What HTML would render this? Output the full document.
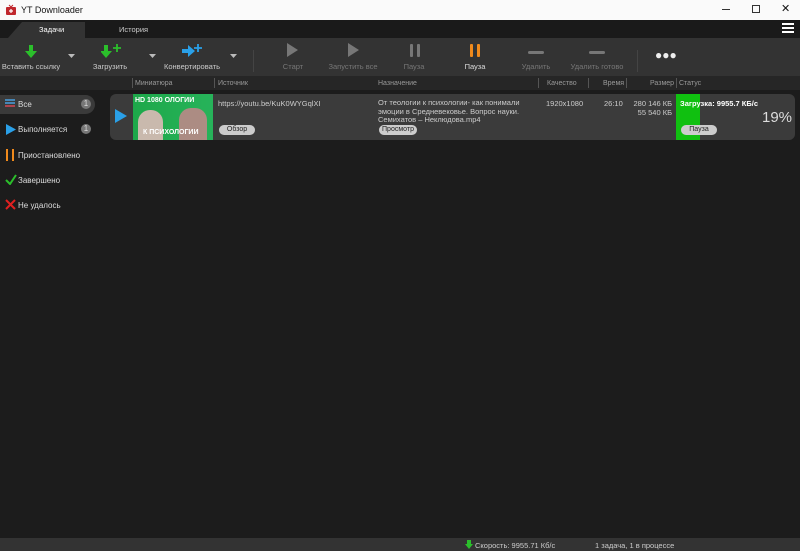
<!DOCTYPE html>
<html><head><meta charset="utf-8"><style>
*{margin:0;padding:0;box-sizing:border-box}
body{width:800px;height:551px;background:#1c1c1c;font-family:"Liberation Sans",sans-serif;font-size:8px;color:#ddd;position:relative;overflow:hidden}
.abs{position:absolute}
.title{left:0;top:0;width:800px;height:20px;background:#fafafa;color:#111;font-size:9px}
.tabs{left:0;top:20px;width:800px;height:18px;background:#1a1a1a}
.tb{left:0;top:38px;width:800px;height:38px;background:#333}
.lbl{font-size:7.5px;color:#777;text-align:center;width:80px}
.hdr{left:0;top:76px;width:800px;height:14px;background:#262626;color:#999;font-size:7px}
.hdr span{position:absolute;top:4px}
.sep{position:absolute;top:2px;width:1px;height:10px;background:#555}
.side div{position:absolute;left:18px;font-size:8px;color:#ddd}
.badge{position:absolute;width:10px;height:10px;border-radius:5px;background:#777;color:#eee;font-size:6px;text-align:center;line-height:10px}
</style></head><body>
<div class="abs title">
 <svg class="abs" style="left:5px;top:4px" width="12" height="12"><rect x="1" y="3" width="10" height="8" rx="1" fill="#c0272d"/><path d="M4 1l2 2 2-2" stroke="#c0272d" fill="none"/><path d="M6 5v4M4 7h4" stroke="#fff" stroke-width="1.2"/></svg>
 <span class="abs" style="left:21px;top:5px">YT Downloader</span>
 <span class="abs" style="left:722px;top:9px;width:8px;height:1px;background:#333"></span>
 <span class="abs" style="left:752px;top:5px;width:8px;height:8px;border:1px solid #333"></span>
 <span class="abs" style="left:781px;top:2px;font-size:11px">✕</span>
</div>
<div class="abs tabs">
 <svg class="abs" style="left:0;top:0" width="90" height="18"><path d="M8 18L22 2H85V18Z" fill="#333"/></svg>
 <span class="abs" style="left:39px;top:5px;color:#fff;font-size:7.5px">Задачи</span>
 <span class="abs" style="left:119px;top:5px;color:#ccc;font-size:7.5px">История</span>
 <div class="abs" style="left:782px;top:3px;width:12px;height:2px;background:#fff;box-shadow:0 4px #fff,0 8px #fff"></div>
</div>
<div class="abs tb">
 <svg class="abs" style="left:24px;top:7px" width="14" height="14"><path d="M5 0h4v6h4L7 13 1 6h4z" fill="#2bbf2b"/></svg>
 <div class="abs lbl" style="left:-9px;top:24px;color:#ccc">Вставить ссылку</div>
 <svg class="abs" style="left:68px;top:16px" width="8" height="5"><path d="M0 0h7L3.5 4z" fill="#bbb"/></svg>
 <svg class="abs" style="left:101px;top:5px" width="22" height="16"><path d="M3 2h4v6h4L5 15-1 8h4z" fill="#2bbf2b"/><path d="M16 1v8M12 5h8" stroke="#2bbf2b" stroke-width="1.8"/></svg>
 <div class="abs lbl" style="left:70px;top:24px;color:#ccc">Загрузить</div>
 <svg class="abs" style="left:149px;top:16px" width="8" height="5"><path d="M0 0h7L3.5 4z" fill="#bbb"/></svg>
 <svg class="abs" style="left:182px;top:5px" width="22" height="16"><path d="M0 6h6V2l7 6-7 6v-4H0z" fill="#2aa0e8"/><path d="M16 1v8M12 5h8" stroke="#2aa0e8" stroke-width="1.8"/></svg>
 <div class="abs lbl" style="left:152px;top:24px;color:#ccc">Конвертировать</div>
 <svg class="abs" style="left:230px;top:16px" width="8" height="5"><path d="M0 0h7L3.5 4z" fill="#bbb"/></svg>
 <div class="abs" style="left:253px;top:12px;width:1px;height:22px;background:#444"></div>
 <svg class="abs" style="left:287px;top:5px" width="12" height="14"><path d="M0 0L11 7 0 14z" fill="#777"/></svg>
 <div class="abs lbl" style="left:253px;top:24px">Старт</div>
 <svg class="abs" style="left:348px;top:5px" width="12" height="14"><path d="M0 0L11 7 0 14z" fill="#777"/></svg>
 <div class="abs lbl" style="left:313px;top:24px">Запустить все</div>
 <svg class="abs" style="left:409px;top:6px" width="12" height="13"><rect x="1" width="3" height="13" rx="1" fill="#777"/><rect x="8" width="3" height="13" rx="1" fill="#777"/></svg>
 <div class="abs lbl" style="left:374px;top:24px">Пауза</div>
 <svg class="abs" style="left:469px;top:6px" width="12" height="13"><rect x="1" width="3" height="13" rx="1" fill="#f08a1c"/><rect x="8" width="3" height="13" rx="1" fill="#f08a1c"/></svg>
 <div class="abs lbl" style="left:435px;top:24px;color:#ddd">Пауза</div>
 <div class="abs" style="left:528px;top:13px;width:16px;height:3px;border-radius:2px;background:#777"></div>
 <div class="abs lbl" style="left:496px;top:24px">Удалить</div>
 <div class="abs" style="left:589px;top:13px;width:16px;height:3px;border-radius:2px;background:#777"></div>
 <div class="abs lbl" style="left:557px;top:24px;width:80px">Удалить готово</div>
 <div class="abs" style="left:637px;top:12px;width:1px;height:22px;background:#444"></div>
 <div class="abs" style="left:655px;top:15px;color:#eee;font-size:12px;letter-spacing:0;line-height:4px">●●●</div>
</div>
<div class="abs hdr">
 <div class="sep" style="left:132px"></div><span style="left:135px">Миниатюра</span>
 <div class="sep" style="left:214px"></div><span style="left:218px">Источник</span>
 <span style="left:378px">Назначение</span>
 <div class="sep" style="left:538px"></div><span style="left:547px">Качество</span>
 <div class="sep" style="left:588px"></div><span style="left:603px">Время</span>
 <div class="sep" style="left:626px"></div><span style="left:650px">Размер</span>
 <div class="sep" style="left:676px"></div><span style="left:679px">Статус</span>
</div>
<div class="side">
 <div class="abs" style="left:0;top:95px;width:95px;height:19px;background:#3a3a3a;border-radius:0 10px 10px 0"></div>
 <svg class="abs" style="left:5px;top:99px" width="10" height="9"><path d="M0 1h10M0 4h10M0 7h10" stroke="#4aa0e0" stroke-width="1.4"/><path d="M0 7h10" stroke="#d33" stroke-width="1.4"/></svg>
 <div style="top:100px">Все</div><div class="badge" style="left:81px;top:99px">1</div>
 <svg class="abs" style="left:6px;top:124px" width="10" height="11"><path d="M0 0L10 5.5 0 11z" fill="#2aa0e8"/></svg>
 <div style="top:125px">Выполняется</div><div class="badge" style="left:81px;top:124px">1</div>
 <svg class="abs" style="left:6px;top:149px" width="9" height="12"><rect width="2" height="12" fill="#f08a1c"/><rect x="6" width="2" height="12" fill="#f08a1c"/></svg>
 <div style="top:151px">Приостановлено</div>
 <svg class="abs" style="left:5px;top:174px" width="12" height="11"><path d="M1 6l4 4 6-9" stroke="#2bbf2b" stroke-width="2" fill="none"/></svg>
 <div style="top:176px">Завершено</div>
 <svg class="abs" style="left:5px;top:199px" width="11" height="11"><path d="M1 1l9 9M10 1l-9 9" stroke="#e02020" stroke-width="2"/></svg>
 <div style="top:201px">Не удалось</div>
</div>
<div class="abs" style="left:110px;top:94px;width:685px;height:46px;background:#3b3b3b;border-radius:6px"></div>
<svg class="abs" style="left:115px;top:109px" width="12" height="14"><path d="M0 0L12 7 0 14z" fill="#2aa0e8"/></svg>
<div class="abs" style="left:133px;top:94px;width:80px;height:46px;background:linear-gradient(90deg,#1da84a,#27b35a);overflow:hidden">
 <div class="abs" style="left:2px;top:3px;font-size:7px;color:#fff;font-weight:bold">HD 1080 ОЛОГИИ</div>
 <div class="abs" style="left:5px;top:16px;width:25px;height:30px;border-radius:12px 12px 0 0;background:#c9b9ad"></div>
 <div class="abs" style="left:46px;top:14px;width:28px;height:32px;border-radius:12px 12px 0 0;background:#b88;opacity:.9"></div>
 <div class="abs" style="left:10px;top:35px;font-size:7px;color:#fff;font-weight:bold">К ПСИХОЛОГИИ</div>
</div>
<div class="abs" style="left:218px;top:99px;font-size:7.5px;color:#ccc">https://youtu.be/KuK0WYGqlXI</div>
<div class="abs" style="left:219px;top:125px;width:36px;height:10px;border-radius:5px;background:#ccc;color:#222;font-size:7px;text-align:center;line-height:10px">Обзор</div>
<div class="abs" style="left:378px;top:99px;font-size:7.5px;color:#ccc;line-height:8.5px;width:160px">От теологии к психологии- как понимали эмоции в Средневековье. Вопрос науки. Семихатов – Неклюдова.mp4</div>
<div class="abs" style="left:379px;top:125px;width:38px;height:10px;border-radius:5px;background:#ccc;color:#222;font-size:7px;text-align:center;line-height:10px">Просмотр</div>
<div class="abs" style="left:546px;top:99px;font-size:7.5px;color:#ccc">1920x1080</div>
<div class="abs" style="left:604px;top:99px;font-size:7.5px;color:#ccc">26:10</div>
<div class="abs" style="left:622px;top:99px;font-size:7.5px;color:#ccc;text-align:right;width:50px;line-height:9px;white-space:nowrap">280 146 КБ<br>55 540 КБ</div>
<div class="abs" style="left:676px;top:94px;width:24px;height:46px;background:#10c010"></div>
<div class="abs" style="left:680px;top:99px;font-size:7.5px;color:#fff;font-weight:bold">Загрузка: 9955.7 КБ/с</div>
<div class="abs" style="left:681px;top:125px;width:36px;height:10px;border-radius:5px;background:#ccc;color:#222;font-size:7px;text-align:center;line-height:10px">Пауза</div>
<div class="abs" style="left:762px;top:109px;font-size:15px;color:#ddd">19%</div>
<div class="abs" style="left:0;top:538px;width:800px;height:13px;background:#333"></div>
<svg class="abs" style="left:465px;top:540px" width="8" height="9"><path d="M2 0h4v4h2L4 9 0 4h2z" fill="#2bbf2b"/></svg>
<div class="abs" style="left:475px;top:541px;font-size:7.5px;color:#ccc">Скорость: 9955.71 Кб/с</div>
<div class="abs" style="left:595px;top:541px;font-size:7.5px;color:#ccc">1 задача, 1 в процессе</div>
</body></html>
